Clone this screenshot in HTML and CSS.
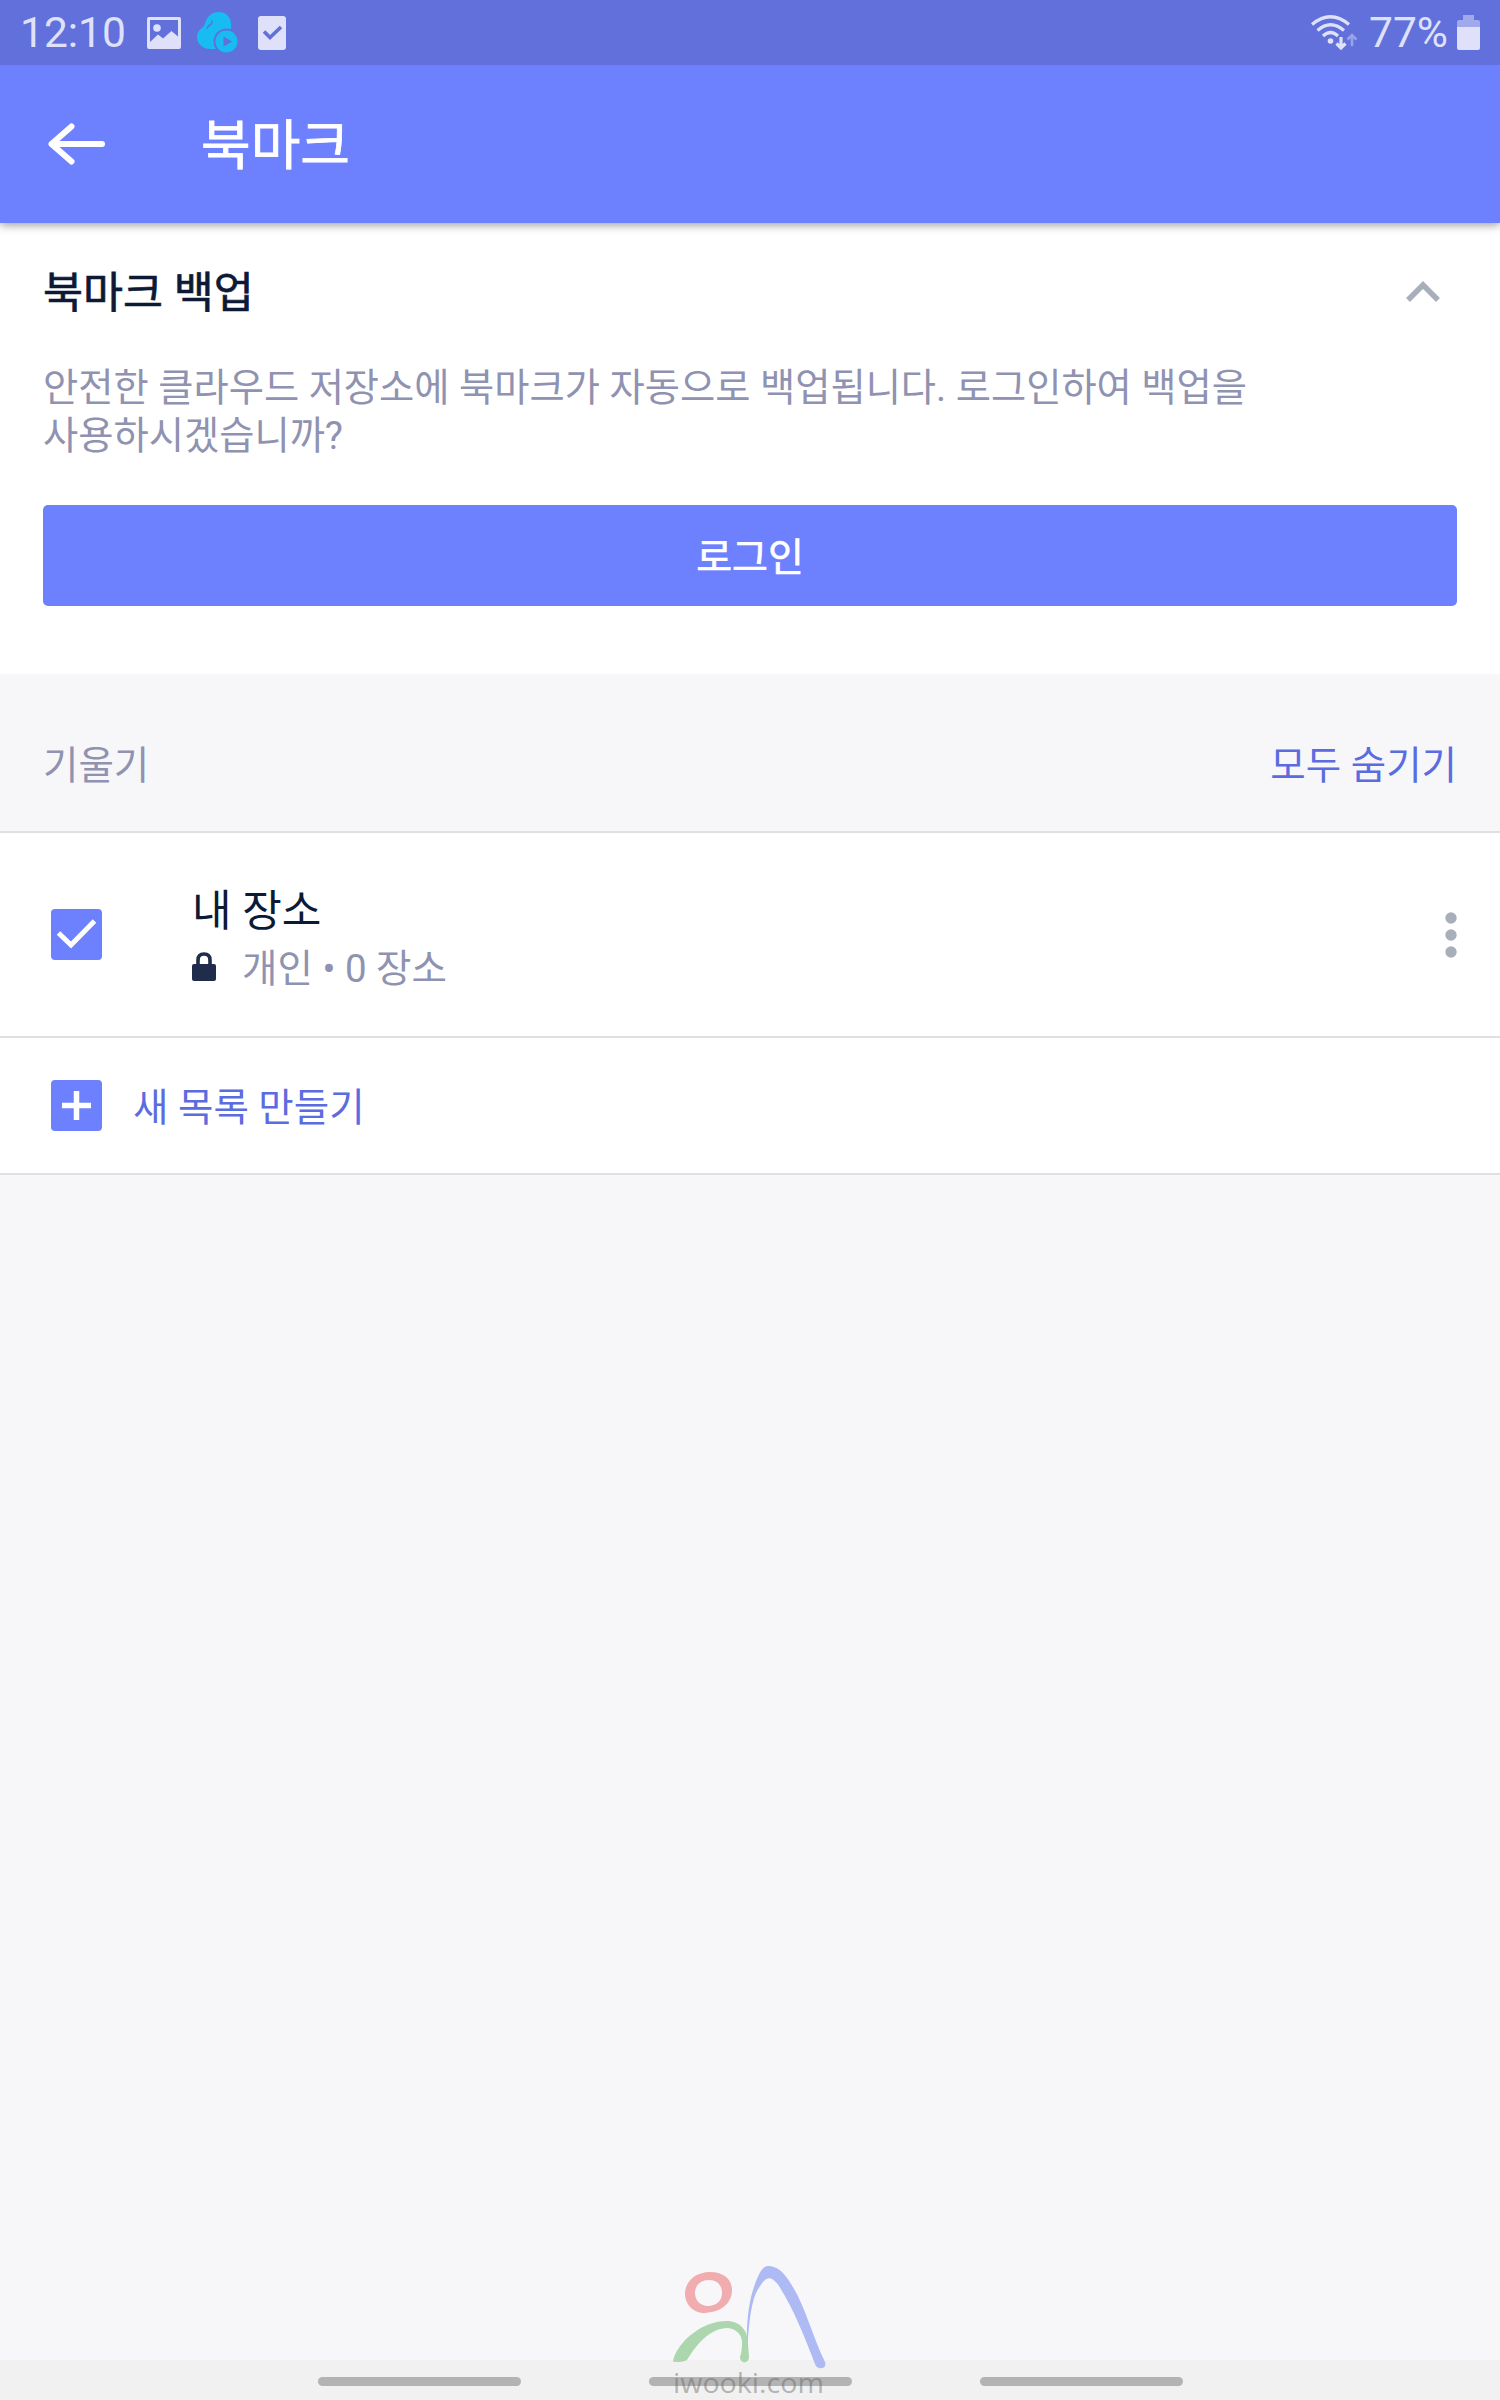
FILE: index.html
```html
<!DOCTYPE html>
<html lang="ko">
<head>
    <meta charset="UTF-8">
    <meta name="viewport" content="width=device-width, initial-scale=1.0">
    <title>북마크</title>
    <link rel="stylesheet" href="styles.css">
</head>
<body>
    <div class="status-bar">
        <span class="clock">12:10</span>
        <svg class="icon-image" width="34" height="32" viewBox="0 0 34 32">
            <path fill="currentColor" fill-rule="evenodd" d="M2 0H32Q34 0 34 2V30Q34 32 32 32H2Q0 32 0 30V2Q0 0 2 0ZM3 3V25L11 17.500L16 21.500L24.500 14L31 19.500V3Z"/>
            <circle cx="10" cy="11" r="3.800" fill="currentColor"/>
        </svg>
        <svg class="icon-cloud" width="42" height="42" viewBox="0 0 42 42">
            <path fill="#18bcf2" d="M22 0C29 0 34 5 34 12V20L20 37H13C5 37 0 31 0 25C0 20 3 17 6 15C9 12 8 8 12 4Q16 0 22 0Z"/>
            <path d="M10 16Q11 14 13 13Q15 12 15 9" fill="none" stroke="#6170da" stroke-width="1.600" stroke-linecap="round"/>
            <circle cx="29.500" cy="29.500" r="13" fill="#6170da"/>
            <circle cx="29.500" cy="29.500" r="11" fill="#18bcf2"/>
            <path d="M26.500 24.500L35 29.500L26.500 34.500Z" fill="#6170da"/>
        </svg>
        <svg class="icon-task" width="28" height="34" viewBox="0 0 28 34">
            <rect width="28" height="34" rx="3" fill="currentColor"/>
            <path d="M6 15.500L12 21.500L23 11" fill="none" stroke="#6170da" stroke-width="3.600"/>
        </svg>
        <div class="status-right">
            <svg width="46" height="36" viewBox="0 0 46 36">
                <g fill="none" stroke="currentColor" stroke-width="3.200">
                    <path d="M1 9.500Q19.500 -6 38 9.500"/>
                    <path d="M6.500 15.500Q19.500 4 33 15.500"/>
                    <path d="M12 21Q19.500 14 27 21"/>
                    <path d="M30 22V33M25.500 28.500L30 33L34.500 28.500"/>
                    <path d="M41 31V20M36.500 24.500L41 20L45.500 24.500" opacity=".45" stroke-width="2.600"/>
                </g>
                <circle cx="19.500" cy="26" r="2.800" fill="currentColor"/>
            </svg>
            <span class="battery-level">77%</span>
            <svg class="icon-battery" width="23" height="35" viewBox="0 0 23 35">
                <path d="M6 0H17V5H21Q23 5 23 7V12H0V7Q0 5 2 5H6Z" fill="currentColor" opacity=".5"/>
                <path d="M0 12H23V33Q23 35 21 35H2Q0 35 0 33Z" fill="currentColor"/>
            </svg>
        </div>
    </div>

    <header class="app-bar">
        <svg width="58" height="42" viewBox="0 0 58 42">
            <path d="M23.500 3.500L3.500 21L23.500 38.500M3.500 21H54" fill="none" stroke="#fff" stroke-width="6" stroke-linecap="round" stroke-linejoin="round"/>
        </svg>
        <h1>북마크</h1>
    </header>

    <section class="backup">
        <div class="backup-head">
            <h2>북마크 백업</h2>
            <svg width="36" height="24" viewBox="0 0 36 24">
                <path d="M3 20L18 5L33 20" fill="none" stroke="#a9aebb" stroke-width="5.500"/>
            </svg>
        </div>
        <p>안전한 클라우드 저장소에 북마크가 자동으로 백업됩니다. 로그인하여 백업을<br>사용하시겠습니까?</p>
        <button class="btn">로그인</button>
    </section>

    <div class="list-head">
        <span>기울기</span>
        <a class="link">모두 숨기기</a>
    </div>

    <div class="row place-row">
        <svg width="51" height="51" viewBox="0 0 51 51">
            <rect width="51" height="51" rx="4" fill="#6d80fd"/>
            <path d="M7.500 24L20 36L43.500 12" fill="none" stroke="#fff" stroke-width="5"/>
        </svg>
        <div class="place">
            <div class="place-name">내 장소</div>
            <div class="place-meta">
                <svg width="24" height="29" viewBox="0 0 24 29">
                    <rect y="12" width="24" height="17" rx="2" fill="#1f2c4b"/>
                    <path d="M6 14V8Q6 2 12 2Q18 2 18 8V14" fill="none" stroke="#1f2c4b" stroke-width="3.600"/>
                </svg>
                <span>개인 • 0 장소</span>
            </div>
        </div>
        <svg class="more" width="12" height="46" viewBox="0 0 12 46" fill="#a9aebb">
            <circle cx="6" cy="6" r="5.700"/>
            <circle cx="6" cy="23" r="5.700"/>
            <circle cx="6" cy="40" r="5.700"/>
        </svg>
    </div>

    <div class="row new-row">
        <svg width="51" height="51" viewBox="0 0 51 51">
            <rect width="51" height="51" rx="4" fill="#6d80fd"/>
            <path d="M25.500 11V40M11 25.500H40" stroke="#fff" stroke-width="5.500"/>
        </svg>
        <a class="link">새 목록 만들기</a>
    </div>

    <nav class="nav-bar">
        <span></span>
        <span></span>
        <span></span>
    </nav>

    <svg class="watermark" width="160" height="136" viewBox="0 0 160 136">
        <path fill="#f0acae" fill-rule="evenodd" d="M40 8C53 8 62 15 62 26C62 40 50 49 32 49C23 48 15 40 15 30C15 17 26 8 40 8ZM39 16C30 16 25 22 25 29C25 37 31 42 38 42C46 42 52 37 52 29C52 21 47 16 39 16Z"/>
        <path fill="#acd6ae" d="M3 97C8 76 34 57 56 57C71 57 78 67 78 80L79 93C79 100 70 100 70 93C72 88 72 82 72 77C71 69 65 65 58 64C40 64 27 80 17 96C15 98 3 99 3 97Z"/>
        <path fill="#adbaf3" d="M77 84C76 59 79 35 85 20C89 9 93 2 98 2C107 2 114 8 121 20C135 41 143 74 155 98C158 105 147 107 145 100C133 69 124 46 109 22C100 10 95 12 86 29C80 43 79 64 77 84Z"/>
        <text x="3" y="129" textLength="151" lengthAdjust="spacingAndGlyphs">iwooki.com</text>
    </svg>
</body>
</html>
```

FILE: styles.css
```css
* {
    box-sizing: border-box;
}
body {
    font-family: Roboto, 'Noto Sans CJK KR', sans-serif;
    margin: 0;
    min-height: 2400px;
    display: flex;
    flex-direction: column;
    position: relative;
    background-color: #f7f7fa;
    color: #0c1a36;
    font-size: 38.5px;
}
svg {
    display: block;
    flex-shrink: 0;
}
h1, h2, p {
    margin: 0;
    font-weight: 400;
}
.status-bar {
    display: flex;
    align-items: center;
    height: 65px;
    padding: 0 20px;
    background-color: #6170da;
    color: #dfe1fb;
    font-size: 42.5px;
    line-height: 65px;
    z-index: 2;
}
.clock {
    width: 127px;
}
.icon-cloud {
    margin-left: 16px;
}
.icon-task {
    margin-left: 19px;
}
.status-right {
    display: flex;
    align-items: center;
    margin-left: auto;
}
.battery-level {
    margin-left: 12px;
    margin-right: 9px;
}
.app-bar {
    display: flex;
    align-items: center;
    height: 158px;
    padding-left: 48px;
    background-color: #6d80fd;
    color: #fff;
    box-shadow: 0 2px 9px rgba(0, 0, 0, 0.4);
    z-index: 1;
}
.app-bar h1 {
    margin-left: 95px;
    padding-top: 6px;
    font-size: 54px;
    line-height: 60px;
    -webkit-text-stroke: 0.8px;
}
.backup {
    height: 451px;
    padding: 39px 43px 0;
    background-color: #fff;
}
.backup-head {
    display: flex;
    align-items: center;
    justify-content: space-between;
    height: 60px;
    padding-right: 16px;
}
.backup-head h2 {
    padding-bottom: 5px;
    font-size: 43.5px;
    -webkit-text-stroke: 0.7px;
}
.backup p {
    margin-top: 42px;
    font-size: 38.3px;
    line-height: 47.5px;
    color: #8f92b0;
}
.btn {
    display: block;
    width: 100%;
    height: 101px;
    margin-top: 46px;
    padding: 0 0 4px;
    border: none;
    border-radius: 5px;
    background-color: #6d80fd;
    color: #fff;
    font: inherit;
    font-size: 39px;
    -webkit-text-stroke: 0.7px;
}
.list-head {
    display: flex;
    justify-content: space-between;
    align-items: center;
    height: 159px;
    padding: 18px 43px 0;
    border-bottom: 2px solid #e0e0e3;
    color: #8f92b0;
}
.link {
    color: #5b6be0;
}
.row {
    display: flex;
    align-items: center;
    padding: 0 43px 0 51px;
    background-color: #fff;
    border-bottom: 2px solid #e0e0e3;
}
.place-row {
    height: 205px;
}
.place {
    margin-left: 90px;
    padding-top: 11px;
}
.place-name {
    font-size: 43px;
    line-height: 57px;
}
.place-meta {
    display: flex;
    align-items: center;
    gap: 26px;
    line-height: 57px;
    color: #8f92b0;
}
.place-meta svg {
    margin-bottom: 4px;
}
.more {
    margin-left: auto;
}
.new-row {
    height: 137px;
}
.new-row .link {
    margin-left: 31px;
    padding-bottom: 4px;
}
.nav-bar {
    display: flex;
    justify-content: center;
    gap: 128px;
    height: 40px;
    margin-top: auto;
    padding-top: 17px;
    background-color: #f1f1f1;
}
.nav-bar span {
    width: 203px;
    height: 9px;
    border-radius: 5px;
    background-color: #b3b3b3;
}
/* logo drawn over the bottom of the page */
.watermark {
    position: absolute;
    left: 670px;
    bottom: 0;
}
.watermark text {
    font-family: 'Open Sans', sans-serif;
    font-size: 27px;
    fill: rgba(100, 100, 100, 0.45);
}
```
